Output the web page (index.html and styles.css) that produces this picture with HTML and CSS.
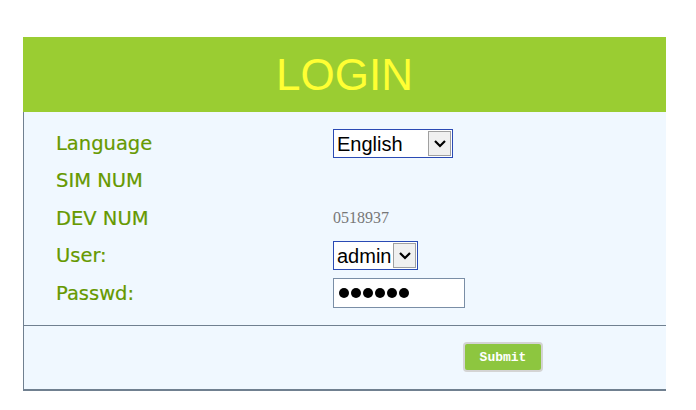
FILE: index.html
```html
<!DOCTYPE html>
<html>
<head>
<meta charset="utf-8">
<title>LOGIN</title>
<link rel="stylesheet" href="styles.css">
</head>
<body>
<div class="panel">
  <div class="head">LOGIN</div>
  <div class="body">
    <div class="form">
      <div class="label">Language</div>
      <div class="value">
        <div class="select select-lang">
          <span class="select-text">English</span>
          <span class="select-btn"><svg width="14" height="9" viewBox="0 0 14 9"><polyline points="2,2 7,7 12,2" fill="none" stroke="#000" stroke-width="2.2"/></svg></span>
        </div>
      </div>
      <div class="label">SIM NUM</div>
      <div class="value"></div>
      <div class="label">DEV NUM</div>
      <div class="value"><span class="devnum">0518937</span></div>
      <div class="label">User:</div>
      <div class="value">
        <div class="select select-user">
          <span class="select-text">admin</span>
          <span class="select-btn"><svg width="14" height="9" viewBox="0 0 14 9"><polyline points="2,2 7,7 12,2" fill="none" stroke="#000" stroke-width="2.2"/></svg></span>
        </div>
      </div>
      <div class="label">Passwd:</div>
      <div class="value">
        <div class="pass"><span class="dot"></span><span class="dot"></span><span class="dot"></span><span class="dot"></span><span class="dot"></span><span class="dot"></span></div>
      </div>
    </div>
    <div class="foot">
      <button class="submit">Submit</button>
    </div>
  </div>
</div>
</body>
</html>
```
FILE: styles.css
```css
html, body {
  margin: 0;
  padding: 0;
  background: #ffffff;
}
body {
  padding: 37px 0 0 23px;
}
.panel {
  width: 643px;
}
.head {
  height: 75px;
  background: #9acd32;
  color: #ffff33;
  font-family: "Liberation Sans", Arial, sans-serif;
  font-size: 44px;
  line-height: 75px;
  text-align: center;
}
.body {
  background: #f0f8ff;
  border-left: 1px solid #708090;
  border-bottom: 2px solid #708090;
}
.form {
  display: grid;
  grid-template-columns: 277px auto;
  grid-auto-rows: 37.4px;
  align-items: center;
  padding: 13px 0 13px 32px;
  border-bottom: 1px solid #708090;
}
.label {
  font-family: "DejaVu Sans", Verdana, sans-serif;
  font-size: 19.5px;
  line-height: 1;
  color: #669900;
  -webkit-text-stroke: 0.2px #669900;
}
.value {
  display: flex;
  align-items: center;
}
.select {
  box-sizing: border-box;
  height: 29px;
  border: 1px solid #2a4ab4;
  background: #fff;
  display: flex;
  align-items: center;
  padding: 1px;
}
.select-lang { width: 120px; }
.select-user { width: 85px; }
.select-text {
  flex: 1;
  font-family: "Liberation Sans", Arial, sans-serif;
  font-size: 20px;
  color: #000;
  padding-left: 2px;
  line-height: 1;
}
.select-btn {
  box-sizing: border-box;
  width: 23px;
  height: 25px;
  background: #f0f0f0;
  border: 1px solid #a0a0a0;
  display: flex;
  align-items: center;
  justify-content: center;
}
.devnum {
  font-family: "Liberation Serif", "Times New Roman", serif;
  font-size: 16px;
  color: #777777;
  line-height: 1;
}
.pass {
  box-sizing: border-box;
  width: 132px;
  height: 30px;
  border: 1px solid #7a8ea6;
  background: #fff;
  display: flex;
  align-items: center;
  gap: 2px;
  padding-left: 5px;
}
.dot {
  width: 10px;
  height: 10px;
  border-radius: 50%;
  background: #000;
}
.foot {
  height: 63px;
  display: flex;
  align-items: center;
  padding-left: 439px;
}
.submit {
  box-sizing: border-box;
  width: 80px;
  height: 30px;
  border: 2px solid #d4d4d4;
  border-radius: 4px;
  background: #8dc63f;
  color: #ffffff;
  font-family: "Liberation Mono", "Courier New", monospace;
  font-weight: bold;
  font-size: 13px;
  padding: 0;
  cursor: pointer;
}
```
